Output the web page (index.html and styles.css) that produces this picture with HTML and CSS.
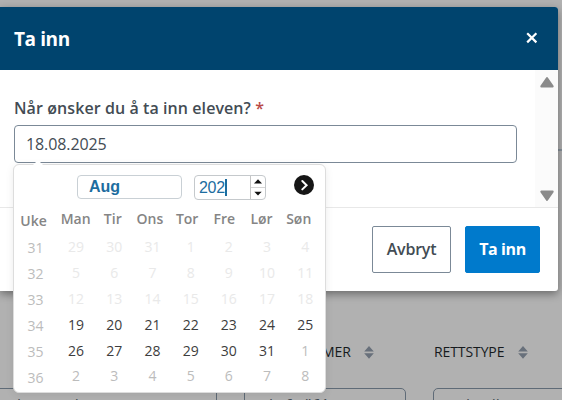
FILE: index.html
```html
<!DOCTYPE html>
<html lang="no">
<head>
<meta charset="UTF-8">
<meta name="viewport" content="width=device-width, initial-scale=1.0">
<title>Ta inn</title>
<link rel="stylesheet" href="styles.css">
</head>
<body>
<div class="page">
    <div class="table-head">
        <div class="column nummer">
            <span>MER</span>
            <svg class="sort" viewBox="0 0 10 13"><path d="M5 0l4.8 5.6H.2zM.2 7.2h9.6L5 12.8z"/></svg>
        </div>
        <div class="column rettstype">
            <span>RETTSTYPE</span>
            <svg class="sort" viewBox="0 0 10 13"><path d="M5 0l4.8 5.6H.2zM.2 7.2h9.6L5 12.8z"/></svg>
        </div>
    </div>
    <div class="filters">
        <div class="filter">al navn el</div>
        <div class="filter">velg fø "61</div>
        <div class="filter">velg alle</div>
    </div>
</div>

<div class="modal">
    <div class="modal-header">
        <h2>Ta inn</h2>
        <svg class="close" viewBox="0 0 12 12"><path d="M1.2 1.2l9.2 9.2M10.4 1.2l-9.2 9.2"/></svg>
    </div>
    <div class="modal-body">
        <div class="field">
            <label>Når ønsker du å ta inn eleven? <span class="required">*</span></label>
            <div class="date-input">18.08.2025</div>
        </div>
        <div class="scrollbar">
            <svg viewBox="0 0 16 12"><path d="M8 2l5.7 8.4H2.3z"/></svg>
            <svg viewBox="0 0 16 12"><path d="M8 10L2.3 1.6h11.4z"/></svg>
        </div>
    </div>
    <div class="modal-footer">
        <button class="btn">Avbryt</button>
        <button class="btn primary">Ta inn</button>
    </div>
</div>

<div class="calendar">
    <div class="calendar-top">
        <div class="month">Aug</div>
        <div class="year">
            <span class="year-value">202</span>
            <div class="spinner">
                <svg viewBox="0 0 14 12"><path d="M2.8 7.8L7 3.4l4.2 4.4z"/></svg>
                <svg viewBox="0 0 14 12"><path d="M2.8 4.2h8.4L7 8.6z"/></svg>
            </div>
        </div>
        <svg class="next" viewBox="0 0 20 20"><circle cx="10" cy="10" r="10"/><path d="M8.3 6l4.3 4.2-4.3 4.2"/></svg>
    </div>
    <div class="calendar-grid">
        <div class="weeks">
            <span class="weekday">Uke</span>
            <span>31</span><span>32</span><span>33</span><span>34</span><span>35</span><span>36</span>
        </div>
        <div class="dates">
            <div class="weekdays">
                <span class="weekday">Man</span>
                <span class="weekday">Tir</span>
                <span class="weekday">Ons</span>
                <span class="weekday">Tor</span>
                <span class="weekday">Fre</span>
                <span class="weekday">Lør</span>
                <span class="weekday">Søn</span>
            </div>
            <div class="days" id="days"></div>
        </div>
    </div>
</div>

<script>
    const days = document.getElementById('days');
    const start = new Date(2024, 6, 29);

    for (let i = 0; i < 42; i++) {
        const date = new Date(start.getFullYear(), start.getMonth(), start.getDate() + i);
        const day = document.createElement('span');
        day.textContent = date.getDate();
        if (i < 21) {
            day.classList.add('disabled');
        } else if (date.getMonth() !== 7) {
            day.classList.add('next-month');
        }
        days.appendChild(day);
    }
</script>
</body>
</html>
```
FILE: styles.css
```css
* {
    box-sizing: border-box;
}
body {
    margin: 0;
    width: 562px;
    height: 400px;
    overflow: hidden;
    position: relative;
    font-family: "Open Sans", "Noto Sans", sans-serif;
    color: #434c54;
    background-color: #b1b1b1;
}
.page {
    height: 400px;
    overflow: hidden;
    padding-top: 338px;
    background: linear-gradient(#87919a, #87919a) 558px 149px / 4px 2px no-repeat;
}
.table-head {
    display: flex;
    height: 28px;
    align-items: center;
    padding-left: 322px;
    font-size: 14px;
    font-weight: 500;
    letter-spacing: -0.1px;
    color: #161a1d;
}
.column {
    display: flex;
    align-items: center;
    justify-content: space-between;
}
.column span {
    padding-bottom: 2px;
}
.nummer {
    width: 52px;
}
.rettstype {
    width: 94px;
    margin-left: 60px;
}
.sort {
    width: 10px;
    height: 13px;
    fill: #68707b;
}
.filters {
    display: flex;
    gap: 27px;
    margin: 22px 0 0 -10px;
}
.filter {
    flex: none;
    height: 40px;
    padding: 5px 13px;
    font-size: 16px;
    border: 1px solid #5f6b77;
    border-radius: 5px;
}
.filter:nth-child(1) {
    width: 227px;
    padding-left: 17px;
}
.filter:nth-child(2) {
    width: 162px;
    padding-left: 7px;
}
.filter:nth-child(3) {
    width: 180px;
    padding-left: 15px;
}
.modal {
    position: absolute;
    top: 7px;
    left: 0;
    width: 558px;
    height: 284px;
    display: flex;
    flex-direction: column;
    background-color: #ffffff;
    border-radius: 0 3px 3px 0;
    overflow: hidden;
    box-shadow: 0 3px 9px rgba(0, 0, 0, 0.4);
}
.modal-header {
    display: flex;
    align-items: center;
    justify-content: space-between;
    height: 63px;
    padding: 0 20px 0 14px;
    background-color: #00446e;
    color: #ffffff;
}
.modal-header h2 {
    margin: 0;
    font-size: 19px;
    font-weight: 700;
    letter-spacing: -0.4px;
}
.close {
    width: 12px;
    height: 12px;
    margin-top: -1px;
    fill: none;
    stroke: #ffffff;
    stroke-width: 2.2;
}
.modal-body {
    display: flex;
    justify-content: space-between;
    height: 137px;
}
.field {
    width: 503px;
    margin-left: 14px;
    padding-top: 27px;
}
.field label {
    display: block;
    height: 28px;
    line-height: 22px;
    font-size: 16px;
    font-weight: 600;
    letter-spacing: 0.08px;
    white-space: nowrap;
}
.required {
    color: #b94a48;
}
.date-input {
    height: 38px;
    padding-left: 11px;
    line-height: 37px;
    font-size: 16px;
    letter-spacing: -0.1px;
    border: 1px solid #7b8997;
    border-radius: 4px;
}
.scrollbar {
    display: flex;
    flex-direction: column;
    justify-content: space-between;
    align-items: center;
    width: 23px;
    padding: 6px 0 5px;
    background-color: #fbfbfb;
}
.scrollbar svg {
    width: 16px;
    height: 12px;
    fill: #8b8b8b;
    stroke: #8b8b8b;
    stroke-width: 2;
    stroke-linejoin: round;
}
.modal-footer {
    display: flex;
    justify-content: flex-end;
    gap: 14px;
    height: 84px;
    padding: 18px 18px 0 0;
    border-top: 1px solid #e8e8e8;
}
.btn {
    width: 79px;
    height: 47px;
    padding: 0 0 2px;
    font-family: inherit;
    font-size: 16px;
    font-weight: 600;
    letter-spacing: -0.2px;
    color: #434c54;
    background-color: #ffffff;
    border: 1px solid #7b8997;
    border-radius: 2px;
}
.btn.primary {
    width: 75px;
    color: #ffffff;
    font-weight: 700;
    letter-spacing: -0.4px;
    background-color: #007acc;
    border-color: #007acc;
}
.calendar {
    position: absolute;
    top: 164px;
    left: 13px;
    width: 313px;
    height: 229px;
    background-color: #ffffff;
    border: 1px solid #dddddd;
    border-radius: 6px;
    box-shadow: 0 2px 8px rgba(0, 0, 0, 0.08);
}
.calendar:before {
    position: absolute;
    content: "";
    top: -5px;
    left: 19px;
    border: 5px solid transparent;
    border-top: none;
    border-bottom-color: #ffffff;
}
.calendar-top {
    display: flex;
    padding: 10px 11px 0 63px;
}
.month {
    width: 105px;
    height: 24px;
    padding-left: 11px;
    line-height: 21px;
    font-family: "Liberation Sans", Arial, sans-serif;
    font-size: 16px;
    font-weight: bold;
    color: #1d6d9f;
    border: 1px solid #c9d0d5;
    border-radius: 4px;
}
.year {
    display: flex;
    justify-content: space-between;
    width: 72px;
    height: 25px;
    margin-left: 12px;
    border: 1px solid #c5c9cc;
    border-radius: 4px;
    overflow: hidden;
}
.year-value {
    height: 17px;
    margin: 3px 0 0 4px;
    line-height: 18px;
    font-family: "Liberation Sans", Arial, sans-serif;
    font-size: 16px;
    letter-spacing: -0.3px;
    color: #1d6d9f;
    border-right: 2px solid #1d6d9f;
}
.spinner {
    display: flex;
    flex-direction: column;
    width: 15px;
    border-left: 1px solid #c5c5c5;
}
.spinner svg {
    width: 14px;
    height: 12px;
    fill: #111111;
}
.spinner svg + svg {
    border-top: 1px solid #d5d5d5;
}
.next {
    width: 20px;
    height: 20px;
    margin-left: auto;
}
.next circle {
    fill: #161616;
}
.next path {
    fill: none;
    stroke: #ffffff;
    stroke-width: 2;
    stroke-linecap: round;
}
.calendar-grid {
    display: flex;
    font-size: 14px;
    line-height: 26px;
    text-align: center;
}
.weeks {
    width: 43px;
    padding-top: 8px;
    color: #bcbcbc;
}
.weeks span {
    display: block;
    height: 26px;
}
.weeks .weekday {
    width: 39px;
    height: 27px;
}
.dates {
    padding-top: 6px;
}
.weekdays {
    display: grid;
    grid-template-columns: repeat(7, 37.2px);
    height: 28px;
}
.weekday {
    font-weight: 600;
    color: #858585;
}
.days {
    display: grid;
    grid-template-columns: repeat(7, 38.2px);
    grid-auto-rows: 25.9px;
    color: #3d3d3d;
}
.disabled {
    color: #e9e9e9;
}
.next-month {
    color: #bcbcbc;
}
```
